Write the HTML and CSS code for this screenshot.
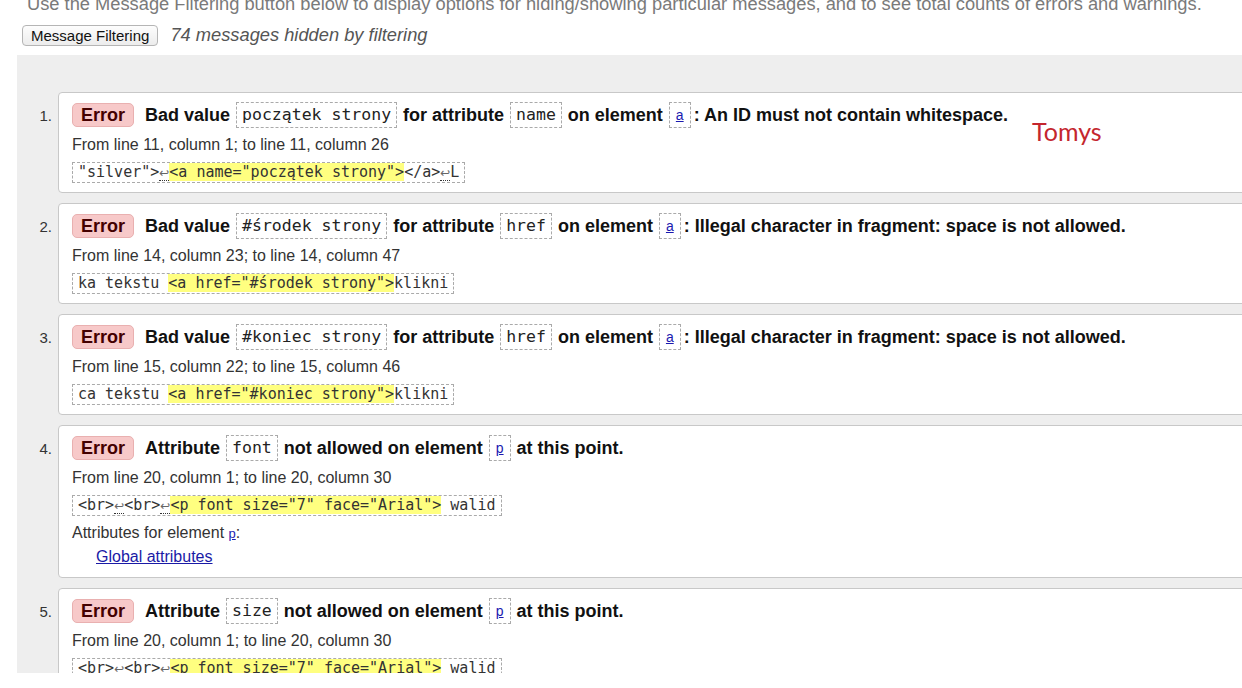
FILE: index.html
```html
<!DOCTYPE html>
<html lang="pl">
<head>
<meta charset="utf-8">
<title>Validator messages</title>
<link rel="stylesheet" href="styles.css">
</head>
<body>
<p class="intro">Use the Message Filtering button below to display options for hiding/showing particular messages, and to see total counts of errors and warnings.</p>
<div class="filter-row">
  <button class="filter-btn" type="button">Message Filtering</button>
  <span class="hidden-count">74 messages hidden by filtering</span>
</div>
<div class="results">
  <ol class="messages">
    <li class="msg">
      <span class="num">1.</span>
      <div class="card">
        <p class="head"><strong class="badge">Error</strong><span>Bad value</span><code class="val">początek strony</code><span>for attribute</span><code class="val">name</code><span>on element</span><code class="el"><a href="#">a</a></code><span class="colon">: An ID must not contain whitespace.</span></p>
        <p class="loc">From line 11, column 1; to line 11, column 26</p>
        <p class="extract"><code>"silver"&gt;<span class="lf">↩</span><b class="hl">&lt;a name="początek strony"&gt;</b>&lt;/a&gt;<span class="lf">↩</span>L</code></p>
      </div>
    </li>
    <li class="msg">
      <span class="num">2.</span>
      <div class="card">
        <p class="head"><strong class="badge">Error</strong><span>Bad value</span><code class="val">#środek strony</code><span>for attribute</span><code class="val">href</code><span>on element</span><code class="el"><a href="#">a</a></code><span class="colon">: Illegal character in fragment: space is not allowed.</span></p>
        <p class="loc">From line 14, column 23; to line 14, column 47</p>
        <p class="extract"><code>ka tekstu <b class="hl">&lt;a href="#środek strony"&gt;</b>klikni</code></p>
      </div>
    </li>
    <li class="msg">
      <span class="num">3.</span>
      <div class="card">
        <p class="head"><strong class="badge">Error</strong><span>Bad value</span><code class="val">#koniec strony</code><span>for attribute</span><code class="val">href</code><span>on element</span><code class="el"><a href="#">a</a></code><span class="colon">: Illegal character in fragment: space is not allowed.</span></p>
        <p class="loc">From line 15, column 22; to line 15, column 46</p>
        <p class="extract"><code>ca tekstu <b class="hl">&lt;a href="#koniec strony"&gt;</b>klikni</code></p>
      </div>
    </li>
    <li class="msg">
      <span class="num">4.</span>
      <div class="card">
        <p class="head"><strong class="badge">Error</strong><span>Attribute</span><code class="val">font</code><span>not allowed on element</span><code class="el"><a href="#">p</a></code><span>at this point.</span></p>
        <p class="loc">From line 20, column 1; to line 20, column 30</p>
        <p class="extract"><code>&lt;br&gt;<span class="lf">↩</span>&lt;br&gt;<span class="lf">↩</span><b class="hl">&lt;p font size="7" face="Arial"&gt;</b> walid</code></p>
        <dl class="attrs">
          <dt>Attributes for element <code class="el-small"><a href="#">p</a></code>:</dt>
          <dd><a href="#">Global attributes</a></dd>
        </dl>
      </div>
    </li>
    <li class="msg">
      <span class="num">5.</span>
      <div class="card">
        <p class="head"><strong class="badge">Error</strong><span>Attribute</span><code class="val">size</code><span>not allowed on element</span><code class="el"><a href="#">p</a></code><span>at this point.</span></p>
        <p class="loc">From line 20, column 1; to line 20, column 30</p>
        <p class="extract"><code>&lt;br&gt;<span class="lf">↩</span>&lt;br&gt;<span class="lf">↩</span><b class="hl">&lt;p font size="7" face="Arial"&gt;</b> walid</code></p>
      </div>
    </li>
  </ol>
</div>
<div class="signature">Tomys</div>
</body>
</html>
```
FILE: styles.css
```css
html, body {
  margin: 0;
  padding: 0;
  background: #fff;
  overflow: hidden;
}
body {
  font-family: "Liberation Sans", Arial, sans-serif;
  color: #222;
  position: relative;
  height: 688px;
}
.intro {
  margin: -7px 0 0 27px;
  font-size: 18.3px;
  line-height: 22px;
  color: #7a7a7a;
  white-space: nowrap;
}
.filter-row {
  display: flex;
  align-items: center;
  gap: 12px;
  margin: 9px 0 0 22px;
  height: 22px;
}
.filter-btn {
  font-family: "Liberation Sans", Arial, sans-serif;
  font-size: 15px;
  height: 21px;
  padding: 0 8px;
  border: 1px solid #b5b5b5;
  border-radius: 4px;
  background: linear-gradient(#fdfdfd, #ececec);
  color: #111;
  line-height: 19px;
}
.hidden-count {
  font-style: italic;
  font-size: 18.3px;
  color: #555;
}
.results {
  margin: 9px -300px 0 17px;
  height: 618px;
  overflow: hidden;
  background: #eeeeee;
  padding-top: 37px;
  box-sizing: border-box;
}
.messages {
  list-style: none;
  margin: 0;
  padding: 0;
}
.msg {
  display: flex;
  margin-bottom: 10px;
}
.num {
  flex: 0 0 41px;
  box-sizing: border-box;
  text-align: right;
  padding: 11px 6px 0 0;
  font-size: 15px;
  line-height: 26px;
  color: #333;
}
.card {
  flex: 1;
  background: #fff;
  border: 1px solid #c8c8c8;
  border-radius: 4px;
  padding: 9px 13px 9px;
}
.head {
  display: flex;
  align-items: center;
  gap: 6px;
  height: 26px;
  margin: 0;
  font-size: 18px;
  font-weight: bold;
  color: #111;
  white-space: nowrap;
}
.badge {
  display: block;
  height: 22px;
  line-height: 22px;
  padding: 0 8px;
  margin-right: 5px;
  background: #f7c9c9;
  border: 1px solid #e9b0b0;
  border-radius: 5px;
  color: #400;
}
.val, .el {
  display: block;
  font-family: "DejaVu Sans Mono", monospace;
  font-weight: normal;
  font-size: 16.5px;
  line-height: 24px;
  padding: 0 5px;
  border: 1px dashed #aaa;
  color: #222;
}
.el {
  font-family: "Liberation Sans", Arial, sans-serif;
  font-size: 14px;
  padding: 0 6px;
}
.colon {
  margin-left: -3px;
}
.el a, .el-small a {
  color: #1a1ab0;
}
.loc {
  margin: 8px 0 0;
  font-size: 16px;
  line-height: 18px;
  color: #333;
}
.extract {
  margin: 8px 0 0;
  line-height: 0;
}
.extract code {
  display: inline-block;
  height: 19px;
  box-sizing: content-box;
  font-family: "DejaVu Sans Mono", monospace;
  font-size: 15px;
  line-height: 19px;
  padding: 0 5px;
  border: 1px dashed #aaa;
  color: #333;
  white-space: pre;
  vertical-align: top;
}
.hl {
  font-weight: normal;
  background: #ffff80;
}
.lf {
  font-family: "DejaVu Sans", sans-serif;
  font-size: 12px;
  line-height: 0;
  color: #666;
  border-bottom: 1px dotted #333;
}
.attrs {
  margin: 8px 0 0;
  font-size: 16px;
  line-height: 18px;
  color: #333;
}
.attrs dt {
  margin: 0;
}
.el-small {
  font-family: "Liberation Sans", Arial, sans-serif;
  font-size: 13px;
}
.attrs dd {
  margin: 5px 0 2px 24px;
}
.attrs dd a {
  color: #1a1aa6;
}
.signature {
  position: absolute;
  left: 1032px;
  top: 116px;
  font-family: Lato, "Open Sans", sans-serif;
  font-size: 25px;
  color: #c4262e;
}
```
